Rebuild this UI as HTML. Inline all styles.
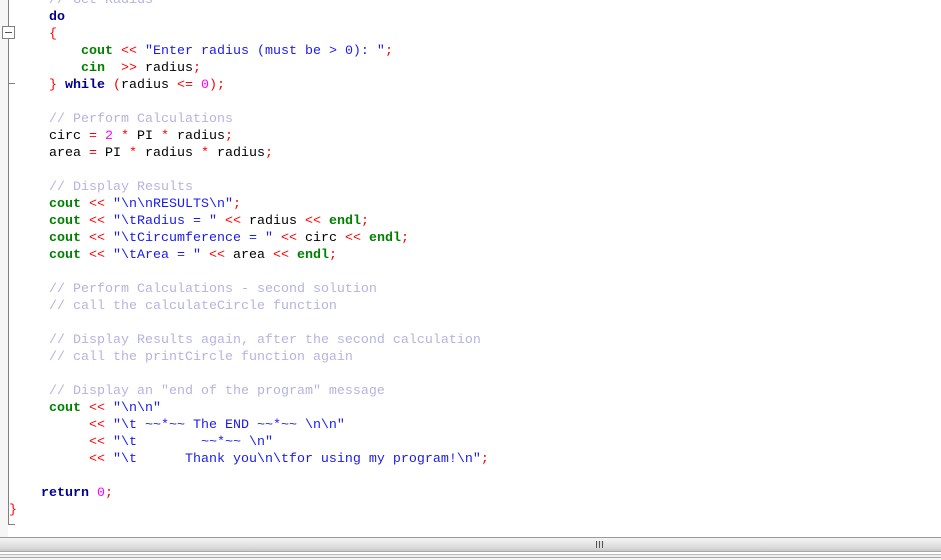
<!DOCTYPE html>
<html><head><meta charset="utf-8"><style>
html,body{margin:0;padding:0;width:941px;height:560px;overflow:hidden;background:#fff;position:relative}
.margin{position:absolute;left:0;top:0;width:8px;height:537px;background:#f6f6f6}
.vl{position:absolute;left:8px;top:0;width:1px;height:525px;background:#808080}
.bl{position:absolute;left:8px;top:524px;width:7px;height:1px;background:#808080}
.tk{position:absolute;left:8px;top:83px;width:7px;height:1px;background:#808080}
.box{position:absolute;left:2px;top:26px;width:11px;height:11px;border:1px solid #808080;background:#fff}
.box:after{content:"";position:absolute;left:2px;top:5px;width:7px;height:1px;background:#555}
pre{position:absolute;left:9px;top:-8px;margin:0;font-family:"Liberation Mono",monospace;font-size:13.33px;line-height:17px;color:#000}
.k{color:#00008b;font-weight:bold}.g{color:#008000;font-weight:bold}.s{color:#1a1aee}.o{color:#f00}.n{color:#ff00ff}.c{color:#b4b4e0}
.sb{position:absolute;left:0;top:537px;width:941px;height:15px;border-top:1px solid #999;background:linear-gradient(#f4f4f4,#dcdcdc 70%,#c8c8c8);box-sizing:border-box;border-bottom:1px solid #aaa}
.gr{position:absolute;left:596px;top:541px;width:8px;height:7px;background:repeating-linear-gradient(90deg,#555 0 1px,#ddd 1px 3px)}
.b2{position:absolute;left:0;top:553px;width:941px;height:7px;background:linear-gradient(#fff 0,#fff 1px,#bbb 1px,#bbb 2px,#eee 2px,#eee 4px,#aaa 4px,#aaa 5px,#f4f4f4 5px)}
</style></head><body>
<div class="margin"></div><div class="vl"></div><div class="tk"></div><div class="bl"></div><div class="box"></div>
<pre><span class="c">     // Get Radius</span>
     <span class="k">do</span>
     <span class="o">{</span>
         <span class="g">cout</span> <span class="o">&lt;&lt;</span> <span class="s">"Enter radius (must be &gt; 0): "</span><span class="o">;</span>
         <span class="g">cin</span>  <span class="o">&gt;&gt;</span> radius<span class="o">;</span>
     <span class="o">}</span> <span class="k">while</span> <span class="o">(</span>radius <span class="o">&lt;=</span> <span class="n">0</span><span class="o">);</span>

     <span class="c">// Perform Calculations</span>
     circ <span class="o">=</span> <span class="n">2</span> <span class="o">*</span> PI <span class="o">*</span> radius<span class="o">;</span>
     area <span class="o">=</span> PI <span class="o">*</span> radius <span class="o">*</span> radius<span class="o">;</span>

     <span class="c">// Display Results</span>
     <span class="g">cout</span> <span class="o">&lt;&lt;</span> <span class="s">"\n\nRESULTS\n"</span><span class="o">;</span>
     <span class="g">cout</span> <span class="o">&lt;&lt;</span> <span class="s">"\tRadius = "</span> <span class="o">&lt;&lt;</span> radius <span class="o">&lt;&lt;</span> <span class="g">endl</span><span class="o">;</span>
     <span class="g">cout</span> <span class="o">&lt;&lt;</span> <span class="s">"\tCircumference = "</span> <span class="o">&lt;&lt;</span> circ <span class="o">&lt;&lt;</span> <span class="g">endl</span><span class="o">;</span>
     <span class="g">cout</span> <span class="o">&lt;&lt;</span> <span class="s">"\tArea = "</span> <span class="o">&lt;&lt;</span> area <span class="o">&lt;&lt;</span> <span class="g">endl</span><span class="o">;</span>

     <span class="c">// Perform Calculations - second solution</span>
     <span class="c">// call the calculateCircle function</span>

     <span class="c">// Display Results again, after the second calculation</span>
     <span class="c">// call the printCircle function again</span>

     <span class="c">// Display an "end of the program" message</span>
     <span class="g">cout</span> <span class="o">&lt;&lt;</span> <span class="s">"\n\n"</span>
          <span class="o">&lt;&lt;</span> <span class="s">"\t ~~*~~ The END ~~*~~ \n\n"</span>
          <span class="o">&lt;&lt;</span> <span class="s">"\t        ~~*~~ \n"</span>
          <span class="o">&lt;&lt;</span> <span class="s">"\t      Thank you\n\tfor using my program!\n"</span><span class="o">;</span>

    <span class="k">return</span> <span class="n">0</span><span class="o">;</span>
<span class="o">}</span></pre>
<div class="sb"></div><div class="gr"></div><div class="b2"></div>
</body></html>
